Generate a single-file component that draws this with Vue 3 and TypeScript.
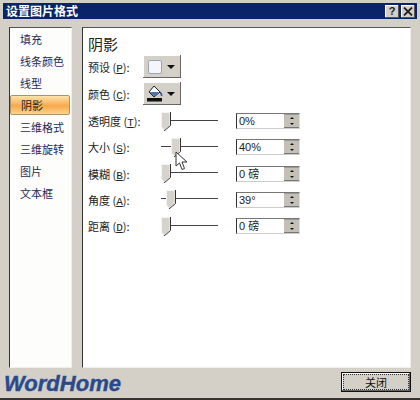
<script setup lang="ts">
interface Row {
  label: string;
  key: string;
  thumb: number;
  value: string;
}

const tabs = ["填充", "线条颜色", "线型", "阴影", "三维格式", "三维旋转", "图片", "文本框"];
const activeTab = "阴影";

const rows: Row[] = [
  { label: "透明度", key: "T", thumb: 0, value: "0%" },
  { label: "大小", key: "S", thumb: 10, value: "40%" },
  { label: "模糊", key: "B", thumb: 0, value: "0 磅" },
  { label: "角度", key: "A", thumb: 5, value: "39°" },
  { label: "距离", key: "D", thumb: 0, value: "0 磅" },
];
</script>

<template>
  <div class="window">
    <div class="titlebar">
      <span class="title">设置图片格式</span>
      <div class="title-btns">
        <span class="tbtn">?</span>
        <span class="tbtn">
          <svg width="10" height="9" viewBox="0 0 10 9">
            <path d="M1 0.5 L9 8.5 M9 0.5 L1 8.5" stroke="#222" stroke-width="1.8" fill="none" />
          </svg>
        </span>
      </div>
    </div>

    <div class="content">
      <ul class="tabs">
        <li v-for="t in tabs" :key="t" class="tab" :class="{ active: t === activeTab }">{{ t }}</li>
      </ul>

      <div class="panel">
        <h2 class="heading">阴影</h2>

        <div class="pick-row">
          <span class="lbl">预设 (<u>P</u>):</span>
          <div class="pick">
            <span class="swatch"></span>
            <span class="arrow"></span>
          </div>
        </div>
        <div class="pick-row">
          <span class="lbl">颜色 (<u>C</u>):</span>
          <div class="pick">
            <svg class="bucket" width="17" height="17" viewBox="0 0 17 17">
              <path d="M8 1 L14 7 L8 12 L3 7 Z" fill="#fff" stroke="#222" stroke-width="1" />
              <path d="M3.5 7 L13.5 7 L8 11.5 Z" fill="#4f6fb0" />
              <path d="M14 7 Q16 9 15.5 11" stroke="#2b4f8f" stroke-width="1.6" fill="none" />
              <rect x="1" y="13" width="15" height="3.5" fill="#111" />
            </svg>
            <span class="arrow"></span>
          </div>
        </div>

        <div class="rows">
          <div v-for="r in rows" :key="r.key" class="row">
            <span class="lbl row-lbl">{{ r.label }} (<u>{{ r.key }}</u>):</span>
            <div class="slider">
              <span class="track"></span>
              <svg class="thumb" :style="{ left: r.thumb + 'px' }" width="10" height="19" viewBox="0 0 10 19">
                <path d="M0.5 0.5 H9 V13 L3 18.5 L0.5 15 Z" fill="#d6d3cc" stroke="#f4f4f2" />
                <path d="M9.5 0 V13.5 L3 19" stroke="#333" fill="none" />
              </svg>
            </div>
            <div class="spin">
              <span class="spin-val">{{ r.value }}</span>
              <div class="spin-btns">
                <span class="up"></span>
                <span class="down"></span>
              </div>
            </div>
          </div>
        </div>

        <svg class="cursor" width="13" height="20" viewBox="0 0 13 20">
          <path d="M1 1 V15 L4.5 12 L7 18.5 L9.5 17.5 L7 11 H12 Z" fill="#fff" stroke="#333" stroke-width="1" />
        </svg>
      </div>
    </div>

    <div class="footer">
      <span class="brand">WordHome</span>
      <button class="close">关闭</button>
    </div>
  </div>
</template>

<style>
html,
body {
  margin: 0;
  background: #d4d0c8;
}
</style>

<style scoped>
.window {
  width: 420px;
  height: 400px;
  box-sizing: border-box;
  padding: 3px 3px 0;
  background: #d4d0c8;
  display: flex;
  flex-direction: column;
  border-bottom: 2px solid #333;
  font-family: "Noto Sans CJK SC", "Liberation Sans", sans-serif;
  color: #1c1c1c;
  overflow: hidden;
}

.titlebar {
  height: 16px;
  flex: none;
  background: #0a246a;
  display: flex;
  align-items: center;
  justify-content: space-between;
  padding: 0 2px 0 3px;
}

.title {
  color: #fff;
  font-size: 12px;
  font-weight: 700;
  line-height: 16px;
}

.title-btns {
  display: flex;
  gap: 2px;
}

.tbtn {
  width: 14px;
  height: 13px;
  background: #d4d0c8;
  box-shadow: inset -1px -1px #555, inset 1px 1px #fff;
  display: flex;
  align-items: center;
  justify-content: center;
  font: 700 11px/13px "Liberation Sans", sans-serif;
  color: #222;
}

.content {
  height: 349px;
  flex: none;
  display: flex;
  padding: 8px 5px 0 6px;
  box-sizing: border-box;
  gap: 10px;
}

.tabs {
  list-style: none;
  margin: 0;
  padding: 0;
  width: 63px;
  height: 341px;
  box-sizing: border-box;
  background: #fdfdfb;
  border-left: 1px solid #333;
  border-top: 1px solid #555;
  border-right: 1px solid #eee;
  border-bottom: 1px solid #eee;
  display: flex;
  flex-direction: column;
}

.tab {
  height: 22px;
  line-height: 22px;
  padding-left: 10px;
  font-size: 11px;
  color: #1f2a5c;
  white-space: nowrap;
}

.tab.active {
  box-sizing: border-box;
  width: 60px;
  height: 20px;
  line-height: 18px;
  margin: 1px 0 1px 0;
  color: #222;
  border: 1px solid #b0926a;
  border-radius: 2px;
  background: linear-gradient(#fde3ad, #f7a94a 55%, #fbd48c);
}

.panel {
  position: relative;
  width: 329px;
  height: 341px;
  box-sizing: border-box;
  background: #fff;
  border-left: 1px solid #333;
  border-top: 1px solid #555;
  border-right: 1px solid #eee;
  border-bottom: 1px solid #eee;
  padding: 5px 0 0 5px;
}

.heading {
  margin: 0;
  font-size: 15px;
  line-height: 22px;
  font-weight: 400;
  color: #222;
}

.lbl {
  font-size: 11px;
  white-space: nowrap;
  color: #222;
}

.lbl u {
  text-decoration: underline;
  font-family: "Liberation Mono", monospace;
}

.pick-row {
  display: flex;
  align-items: center;
  height: 23px;
  margin-bottom: 4px;
}

.pick-row .lbl {
  width: 55px;
}

.pick {
  width: 38px;
  height: 23px;
  box-sizing: border-box;
  background: #d4d0c8;
  box-shadow: inset -1px -1px #666, inset 1px 1px #fff;
  display: flex;
  align-items: center;
  padding: 0 6px 0 4px;
  justify-content: space-between;
}

.swatch {
  width: 12px;
  height: 12px;
  margin-left: 1px;
  background: #f4f6fc;
  border: 1px solid #98a4bc;
  border-radius: 2px;
}

.arrow {
  width: 0;
  height: 0;
  border-left: 4px solid transparent;
  border-right: 4px solid transparent;
  border-top: 4px solid #111;
}

.bucket {
  margin-left: -1px;
}

.rows {
  display: flex;
  flex-direction: column;
  margin-top: -1px;
}

.row {
  display: flex;
  align-items: center;
  height: 26.25px;
}

.row-lbl {
  width: 73px;
}

.slider {
  position: relative;
  width: 57px;
  height: 19px;
  margin-right: 18px;
}

.track {
  position: absolute;
  left: 0;
  right: 0;
  top: 8px;
  height: 1px;
  background: #444;
}

.thumb {
  position: absolute;
  top: 0;
}

.spin {
  width: 64px;
  height: 16px;
  box-sizing: border-box;
  display: flex;
  justify-content: space-between;
  align-items: center;
  border-left: 1px solid #333;
  border-top: 1px solid #777;
  border-right: 1px solid #ddd;
  border-bottom: 1px solid #ccc;
  background: #fff;
}

.spin-val {
  font-size: 11px;
  line-height: 14px;
  padding-left: 2px;
  color: #222;
  font-family: "Liberation Sans", "Noto Sans CJK SC", sans-serif;
  white-space: pre;
}

.spin-btns {
  width: 15px;
  height: 14px;
  background: linear-gradient(#c4c0b8 0 46%, #777 46% 54%, #c4c0b8 54%);
  display: flex;
  flex-direction: column;
  justify-content: space-between;
  align-items: center;
  padding: 2px 0;
  box-sizing: border-box;
  border-top: 1px solid #999;
  border-bottom: 1px solid #777;
}

.up,
.down {
  width: 0;
  height: 0;
  border-left: 2px solid transparent;
  border-right: 2px solid transparent;
}

.up {
  border-bottom: 2px solid #111;
}

.down {
  border-top: 2px solid #111;
}

.cursor {
  position: absolute;
  left: 92px;
  top: 123px;
}

.footer {
  flex: 1;
  display: flex;
  align-items: flex-start;
  justify-content: space-between;
  padding: 4px 6px 0 1px;
}

.brand {
  font: italic 700 22px/24px "Liberation Sans", sans-serif;
  color: #2a4a8c;
  -webkit-text-stroke: 0.4px #2a4a8c;
}

.close {
  width: 70px;
  height: 20px;
  padding: 0;
  background: #d4d0c8;
  border: 1px solid #111;
  outline: 1px dotted #333;
  outline-offset: -3px;
  box-shadow: inset -1px -1px #666, inset 1px 1px #fff;
  font-family: "Noto Sans CJK SC", sans-serif;
  font-size: 11px;
  line-height: 16px;
  color: #111;
}
</style>
